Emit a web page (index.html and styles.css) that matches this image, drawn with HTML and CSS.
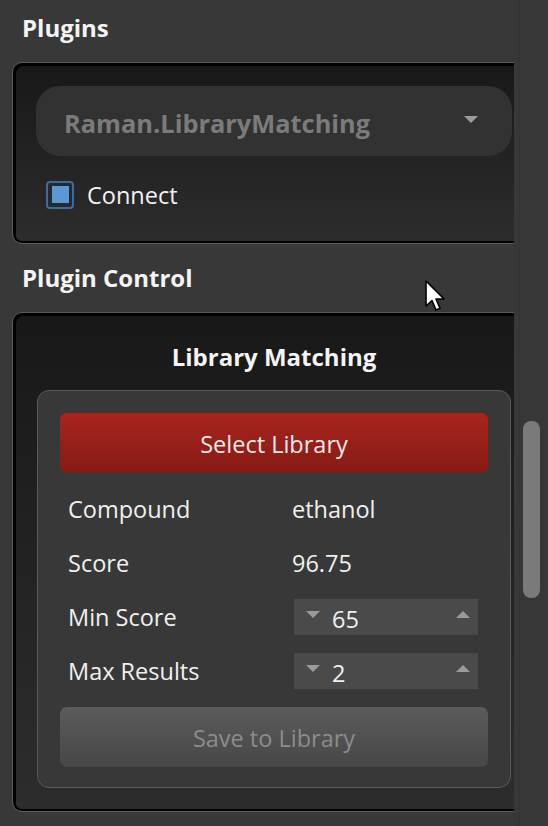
FILE: index.html
```html
<!DOCTYPE html>
<html>
<head>
<meta charset="utf-8">
<link rel="stylesheet" href="styles.css">
</head>
<body>
<div class="window">
  <div class="scroll-area">
    <h2 class="section-title first">Plugins</h2>
    <div class="card card-plugins">
      <div class="combo">
        <span class="combo-text">Raman.LibraryMatching</span>
        <span class="combo-arrow"></span>
      </div>
      <div class="check">
        <span class="check-box"><span class="check-mark"></span></span>
        <span class="check-label">Connect</span>
      </div>
    </div>
    <h2 class="section-title">Plugin Control</h2>
    <div class="card card-control">
      <h3 class="card-title">Library Matching</h3>
      <div class="group">
        <div class="btn btn-primary">Select Library</div>
        <div class="field-grid">
          <span class="label">Compound</span>
          <span class="value">ethanol</span>
          <span class="label">Score</span>
          <span class="value">96.75</span>
          <span class="label">Min Score</span>
          <div class="spin">
            <span class="spin-down"></span>
            <span class="spin-value">65</span>
            <span class="spin-up"></span>
          </div>
          <span class="label">Max Results</span>
          <div class="spin">
            <span class="spin-down"></span>
            <span class="spin-value">2</span>
            <span class="spin-up"></span>
          </div>
        </div>
        <div class="btn btn-disabled">Save to Library</div>
      </div>
    </div>
  </div>
  <div class="scrollbar">
    <div class="thumb"></div>
  </div>
  <svg class="cursor" width="20" height="32" viewBox="0 0 20 32">
    <path d="M1 1 L1 26 L7 20.5 L11 30 L15 28.3 L11 19 L19 19 Z" fill="#fff" stroke="#000" stroke-width="1.6" stroke-linejoin="round"/>
  </svg>
</div>
</body>
</html>
```

FILE: styles.css
```css
* { box-sizing: border-box; }

body {
  margin: 0;
  background: #383838;
  font-family: "Open Sans", "Noto Sans", sans-serif;
  color: #f0f0f0;
}

.window {
  position: relative;
  display: flex;
  width: 548px;
  height: 826px;
  overflow: hidden;
}

.scroll-area {
  flex: none;
  width: 514px;
  height: 826px;
  overflow: hidden;
  padding-left: 12px;
}

.section-title {
  margin: 19px 0 19px 0;
  padding-left: 10px;
  font-size: 24px;
  font-weight: 700;
  line-height: 30px;
  color: #f4f4f4;
  white-space: nowrap;
}

.section-title.first {
  margin-top: 13px;
}

.card {
  width: 524px;
  border: 1px solid #5c5c5c;
  border-radius: 10px;
  box-shadow: inset 2px 2px 0 1px #000, inset 0 0 0 2px #000;
  background: linear-gradient(to bottom, #181818, #2d2d2d);
}

.card-plugins {
  padding: 23px 23px 34px 23px;
}

.combo {
  display: flex;
  align-items: center;
  justify-content: space-between;
  height: 70px;
  padding: 0 34px 0 28px;
  border-radius: 24px;
  background: #323232;
}

.combo-text {
  padding-top: 4px;
  font-size: 25.4px;
  font-weight: 700;
  color: #7b7b7b;
}

.combo-arrow {
  width: 0;
  height: 0;
  margin-top: -4px;
  border-left: 7px solid transparent;
  border-right: 7px solid transparent;
  border-top: 7px solid #9c9c9c;
}

.check {
  display: flex;
  align-items: center;
  gap: 13px;
  margin: 24px 0 0 10px;
  height: 29px;
}

.check-box {
  display: flex;
  align-items: center;
  justify-content: center;
  width: 28px;
  height: 28px;
  border: 2px solid #3f6d9a;
  border-radius: 4px;
  background: #252a30;
}

.check-mark {
  width: 17px;
  height: 17px;
  background: #5b98d6;
}

.check-label {
  font-size: 23.5px;
  color: #f2f2f2;
}

.card-control {
  padding: 29px 24px 23px 24px;
}

.card-title {
  margin: 0 0 18px 0;
  text-align: center;
  font-size: 24px;
  font-weight: 700;
  line-height: 30px;
  color: #f4f4f4;
}

.group {
  border: 1px solid #5a5a5a;
  border-radius: 12px;
  background: #383838;
  padding: 22px 22px 20px 22px;
}

.btn {
  display: flex;
  align-items: center;
  justify-content: center;
  height: 60px;
  padding-top: 2px;
  border-radius: 7px;
  font-size: 23.5px;
}

.btn-primary {
  background: linear-gradient(to bottom, #a9251d, #861a15);
  color: #f3eaea;
}

.btn-disabled {
  background: linear-gradient(to bottom, #5b5b5b, #474747);
  color: #8c8c8c;
}

.field-grid {
  display: grid;
  grid-template-columns: 234px 184px;
  grid-auto-rows: 36px;
  row-gap: 18px;
  align-items: center;
  margin: 18px 0;
}

.label {
  padding-left: 8px;
  font-size: 23.5px;
  color: #f0f0f0;
}

.value {
  font-size: 23.5px;
  color: #f0f0f0;
  margin-left: -2px;
}

.spin {
  display: flex;
  align-items: center;
  height: 36px;
  background: #4a4a4a;
  padding: 0 8px 0 12px;
}

.spin-value {
  flex: 1;
  margin-left: 12px;
  padding-top: 3px;
  font-size: 23.5px;
  color: #f0f0f0;
}

.spin-down,
.spin-up {
  width: 0;
  height: 0;
  border-left: 7px solid transparent;
  border-right: 7px solid transparent;
}

.spin-down {
  border-top: 7px solid #9a9a9a;
  margin-top: -6px;
}

.spin-up {
  border-bottom: 7px solid #9a9a9a;
  margin-top: -6px;
}

.scrollbar {
  flex: none;
  width: 34px;
  height: 826px;
  background: #373737;
  box-shadow: inset 5px 0 0 #383838, inset 6px 0 0 #333333;
  padding: 421px 0 0 9px;
}

.thumb {
  width: 17px;
  height: 177px;
  border-radius: 8px;
  background: #7a7a7a;
}

.cursor {
  position: absolute;
  left: 425px;
  top: 280px;
}
```
